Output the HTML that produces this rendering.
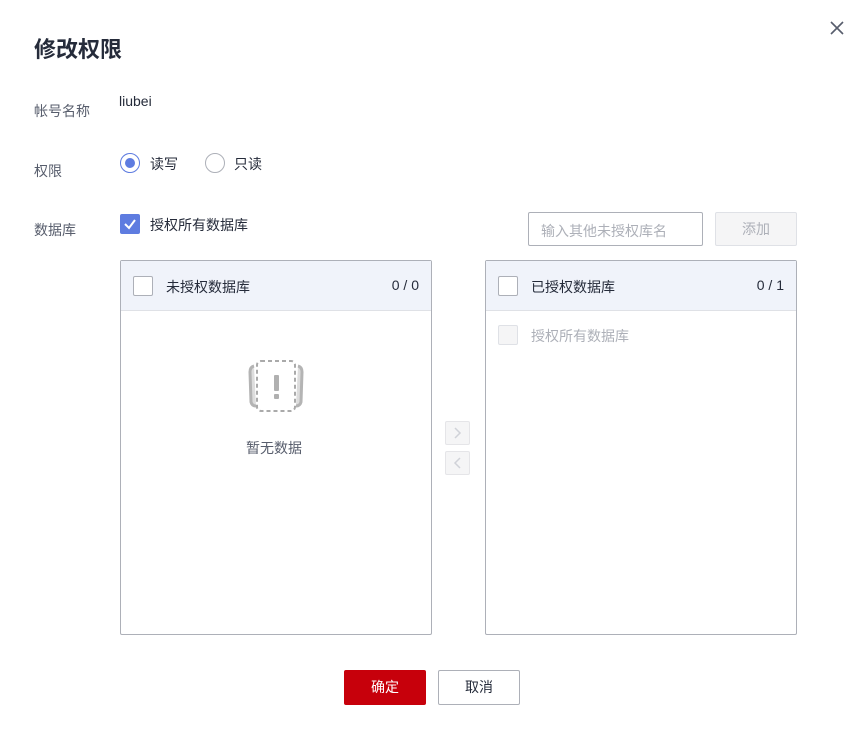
<!DOCTYPE html>
<html><head><meta charset="utf-8"><style>
*{box-sizing:border-box;margin:0;padding:0}
body{width:859px;height:742px;background:#fff;font-family:"Liberation Sans","Noto Sans CJK SC",sans-serif;position:relative;overflow:hidden;color:#252b3a}
.a{position:absolute;white-space:nowrap}
.lbl{font-size:14px;color:#575d6c}
.cb{position:absolute;width:20px;height:20px;border:1px solid #adb0b8;border-radius:2px;background:#fff}
.panel{position:absolute;border:1px solid #adb0b8;border-radius:2px;background:#fff}
.ph{height:50px;background:#f0f3fa;border-bottom:1px solid #dfe1e6;position:relative}
.btn{position:absolute;border-radius:2px;font-size:14px;text-align:center}
</style></head><body>
<div class="a" style="left:34px;top:32px;font-size:22px;font-weight:bold;color:#252b3a">修改权限</div>
<svg class="a" style="left:829px;top:20px" width="16" height="16"><path d="M2 2L14 14M14 2L2 14" stroke="#575d6c" stroke-width="1.6"/></svg>
<div class="a lbl" style="left:34px;top:101px">帐号名称</div>
<div class="a" style="left:119px;top:93px;font-size:14px;color:#252b3a">liubei</div>
<div class="a lbl" style="left:34px;top:161px">权限</div>
<div class="a" style="left:120px;top:153px;width:20px;height:20px;border:1px solid #5e7ce0;border-radius:50%"><div style="position:absolute;left:4px;top:4px;width:10px;height:10px;border-radius:50%;background:#5e7ce0"></div></div>
<div class="a" style="left:150px;top:154px;font-size:14px">读写</div>
<div class="a" style="left:205px;top:153px;width:20px;height:20px;border:1px solid #adb0b8;border-radius:50%"></div>
<div class="a" style="left:234px;top:154px;font-size:14px">只读</div>
<div class="a lbl" style="left:34px;top:220px">数据库</div>
<div class="a" style="left:120px;top:214px;width:20px;height:20px;background:#5e7ce0;border-radius:2px"><svg width="20" height="20"><path d="M5 10L9 14L15 6" stroke="#fff" stroke-width="2" fill="none"/></svg></div>
<div class="a" style="left:150px;top:215px;font-size:14px">授权所有数据库</div>
<div class="a" style="left:528px;top:212px;width:175px;height:34px;border:1px solid #adb0b8;border-radius:2px;font-size:14px;color:#adb0b8;padding:8px 0 0 12px">输入其他未授权库名</div>
<div class="btn" style="left:715px;top:212px;width:82px;height:34px;background:#f5f5f6;border:1px solid #dfe1e6;color:#adb0b8;line-height:32px">添加</div>

<div class="panel" style="left:120px;top:260px;width:312px;height:375px">
 <div class="ph"><div class="cb" style="left:12px;top:15px"></div><div class="a" style="left:45px;top:16px;font-size:14px">未授权数据库</div><div class="a" style="right:12px;top:16px;font-size:14px">0 / 0</div></div>
 <svg class="a" style="left:125px;top:97px" width="60" height="56"><path d="M8 8Q4 9 4 14L5 44Q6 48 10 48" stroke="#b4b4b4" stroke-width="3" fill="#ddd"/><path d="M52 8Q56 9 56 14L55 44Q54 48 50 48" stroke="#b4b4b4" stroke-width="3" fill="#ddd"/><rect x="11" y="3" width="38" height="50" rx="4" fill="#fff" stroke="#aaa" stroke-width="2" stroke-dasharray="4 3"/><rect x="28" y="17" width="5" height="16" rx="1" fill="#b0b0b0"/><rect x="28" y="36" width="5" height="5" rx="1" fill="#b0b0b0"/></svg>
 <div class="a" style="left:125px;top:177px;font-size:14px;color:#575d6c">暂无数据</div>
</div>
<div class="btn" style="left:445px;top:421px;width:25px;height:24px;background:#f5f5f6;border:1px solid #e5e5e8"><svg width="23" height="22"><path d="M9 6L14 11L9 16" stroke="#d0d2d8" stroke-width="1.5" fill="none"/></svg></div>
<div class="btn" style="left:445px;top:451px;width:25px;height:24px;background:#f5f5f6;border:1px solid #e5e5e8"><svg width="23" height="22"><path d="M14 6L9 11L14 16" stroke="#d0d2d8" stroke-width="1.5" fill="none"/></svg></div>
<div class="panel" style="left:485px;top:260px;width:312px;height:375px">
 <div class="ph"><div class="cb" style="left:12px;top:15px"></div><div class="a" style="left:45px;top:16px;font-size:14px">已授权数据库</div><div class="a" style="right:12px;top:16px;font-size:14px">0 / 1</div></div>
 <div class="cb" style="left:12px;top:64px;background:#f5f5f6;border-color:#dfe1e6"></div>
 <div class="a" style="left:45px;top:65px;font-size:14px;color:#adb0b8">授权所有数据库</div>
</div>
<div class="btn" style="left:344px;top:670px;width:82px;height:35px;background:#c7000b;color:#fff;line-height:35px">确定</div>
<div class="btn" style="left:438px;top:670px;width:82px;height:35px;border:1px solid #adb0b8;color:#252b3a;line-height:33px">取消</div>
</body></html>
